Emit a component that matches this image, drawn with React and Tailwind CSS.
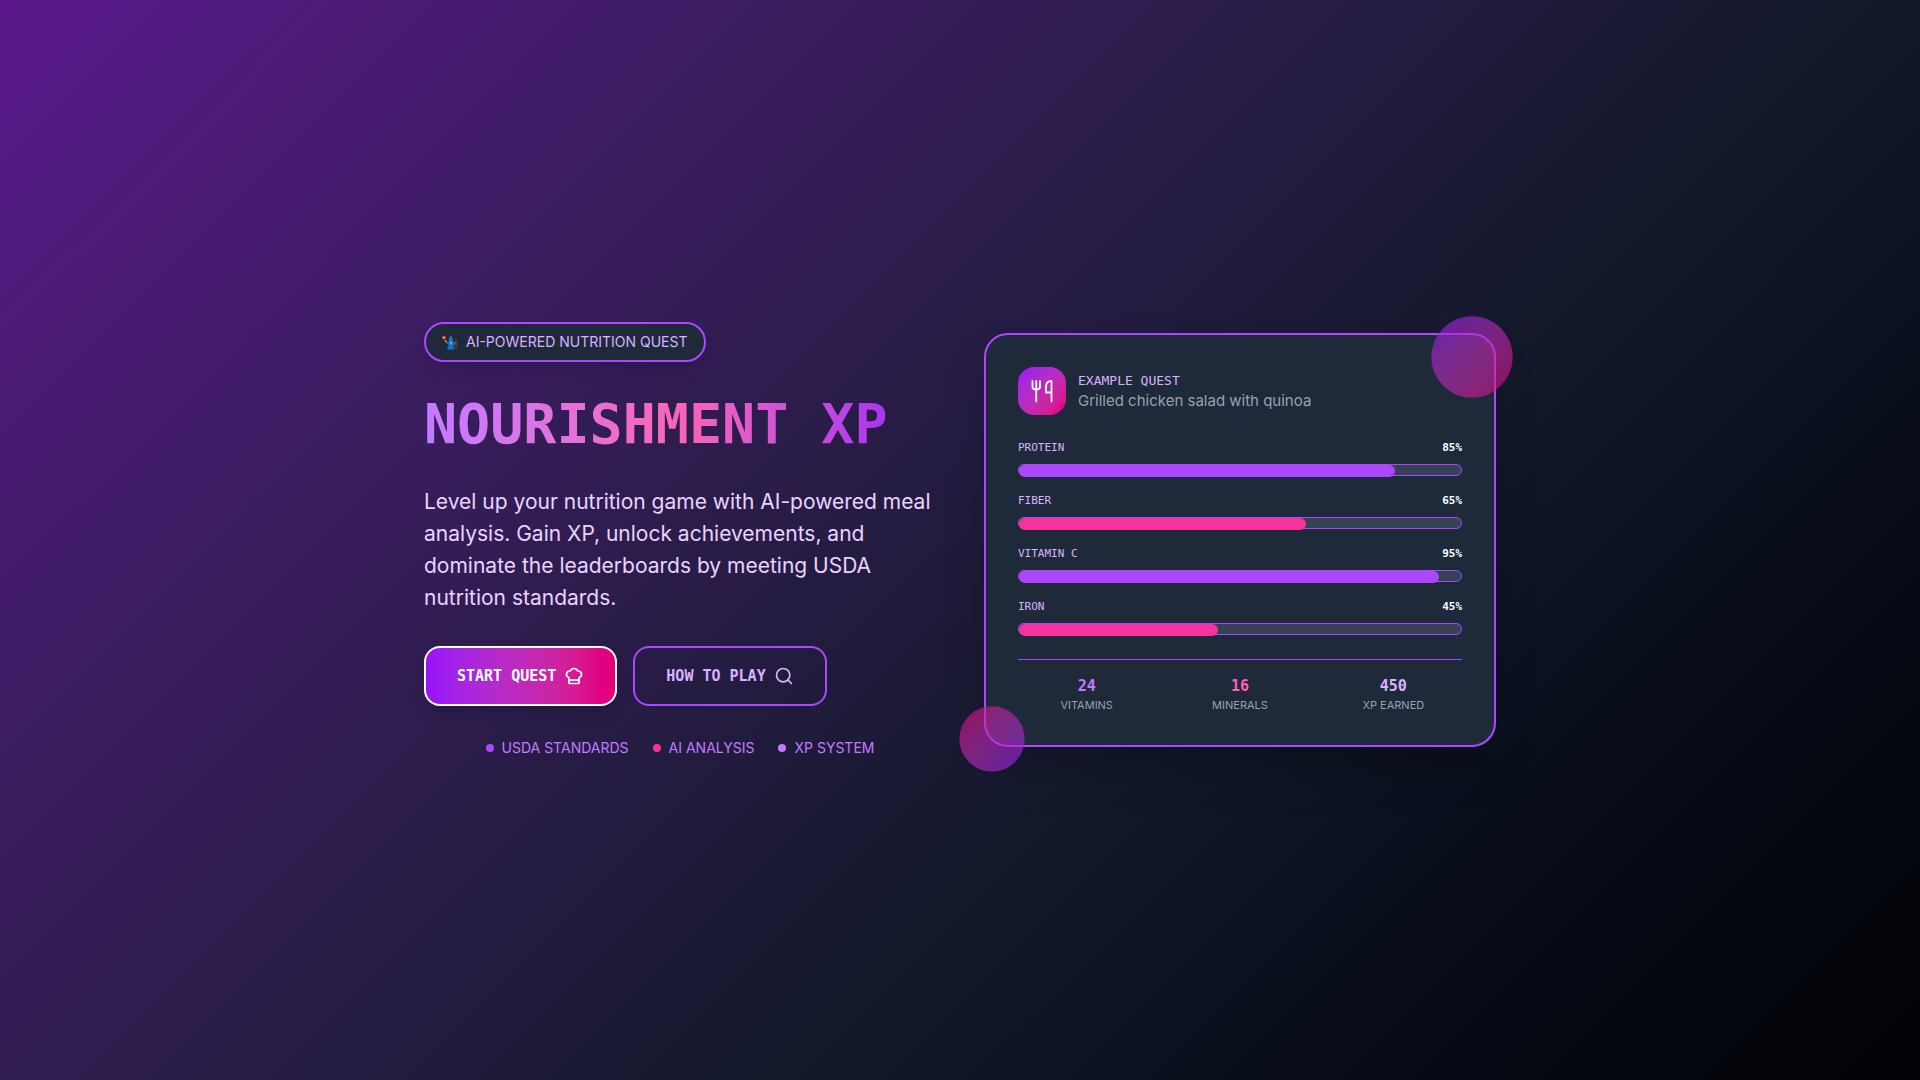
import { ChefHat, Search } from 'lucide-react';

const nutrients = [
  { name: 'PROTEIN', value: 85, bar: 'bg-purple-500' },
  { name: 'FIBER', value: 65, bar: 'bg-pink-500' },
  { name: 'VITAMIN C', value: 95, bar: 'bg-purple-500' },
  { name: 'IRON', value: 45, bar: 'bg-pink-500' },
];

const stats = [
  { value: '24', label: 'VITAMINS', color: 'text-purple-400' },
  { value: '16', label: 'MINERALS', color: 'text-pink-400' },
  { value: '450', label: 'XP EARNED', color: 'text-purple-300' },
];

const features = [
  { label: 'USDA STANDARDS', dot: 'bg-purple-500' },
  { label: 'AI ANALYSIS', dot: 'bg-pink-500' },
  { label: 'XP SYSTEM', dot: 'bg-purple-400' },
];

const WizardIcon = () => (
  <svg className="w-4 h-4" viewBox="0 0 16 16" aria-hidden="true">
    <path d="M8.6 0.8 L11.4 5.4 H6.4 Z" fill="#1976b8" />
    <path d="M7 5.4 h3.8 v2 q-1.9 2 -3.8 0 Z" fill="#5b6f86" />
    <path d="M3.6 7.2 l3.4 0.6 h4 l2.6 0.2 v2.6 l-2.4 0.4 l1.2 4.4 H5 l1.6 -4.8 l-3 -1.6 Z" fill="#0f74c4" />
    <path d="M7.6 8 l1.4 3 1.4 -3 Z" fill="#8aa9c4" />
    <path d="M14 5.6 V15" stroke="#8d4a2c" strokeWidth="1" />
    <circle cx="1.9" cy="3.6" r="1.9" fill="#f4511e" />
    <circle cx="2.2" cy="3.8" r="0.9" fill="#ffb03a" />
    <circle cx="3.6" cy="7" r="0.9" fill="#f6a13a" />
  </svg>
);

const CutleryIcon = () => (
  <svg className="w-6 h-6" fill="none" stroke="currentColor" viewBox="0 0 24 24" aria-hidden="true">
    <path strokeLinecap="round" strokeWidth={1.8} d="M2.5 2v6c0 1.6 1.3 2.500 3.750 2.500S10 9.600 10 8V2M6.250 2v20.500" />
    <path strokeLinecap="round" strokeLinejoin="round" strokeWidth={1.8} d="M21.500 22.500V2c-3.500 0-5.500 2.500-5.500 6v5.500h5.500" />
  </svg>
);

const NutrientBar = ({ name, value, bar }) => (
  <div>
    <div className="flex justify-between mb-2 font-['DejaVu_Sans_Mono',monospace] text-[11px] leading-[17px]">
      <span className="text-purple-300">{name}</span>
      <span className="text-white font-bold">{value}%</span>
    </div>
    <div className="h-3 bg-gray-700 rounded-full border border-purple-500">
      <div className={`h-3 rounded-full ${bar}`} style={{ width: `${value}%` }} />
    </div>
  </div>
);

const QuestCard = () => (
  <div className="relative">
    <div className="bg-gray-800 border-2 border-purple-500 rounded-3xl p-8 shadow-2xl">
      <div className="flex items-center gap-3 mb-6">
        <div className="w-12 h-12 rounded-2xl bg-gradient-to-br from-purple-600 to-pink-600 text-white flex items-center justify-center">
          <CutleryIcon />
        </div>
        <div>
          <h2 className="font-['DejaVu_Sans_Mono',monospace] text-[13px] leading-5 text-purple-300">EXAMPLE QUEST</h2>
          <p className="text-[15px] leading-5 text-gray-400">Grilled chicken salad with quinoa</p>
        </div>
      </div>

      <div className="space-y-4">
        {nutrients.map((nutrient) => (
          <NutrientBar key={nutrient.name} {...nutrient} />
        ))}
      </div>

      <div className="mt-6 pt-4 border-t border-purple-500 grid grid-cols-3 gap-4 text-center">
        {stats.map((stat) => (
          <div key={stat.label}>
            <div className={`font-['DejaVu_Sans_Mono',monospace] text-[15px] leading-[21px] font-bold ${stat.color}`}>
              {stat.value}
            </div>
            <div className="text-[11px] leading-4 text-gray-400">{stat.label}</div>
          </div>
        ))}
      </div>
    </div>

    <div className="absolute -top-4 -right-4 w-20 h-20 scale-102 rounded-full bg-gradient-to-br from-purple-600 to-pink-600 opacity-60" />
    <div className="absolute -bottom-6 -left-6 w-16 h-16 scale-102 rounded-full bg-gradient-to-br from-pink-600 to-purple-600 opacity-60" />
  </div>
);

const Hero = () => (
  <div>
    <div className="flex">
      <div className="flex items-center gap-2 h-10 px-4 mb-8 bg-gray-800 border-2 border-purple-500 rounded-full shadow-lg text-sm text-purple-300">
        <WizardIcon />
        <span>AI-POWERED NUTRITION QUEST</span>
      </div>
    </div>

    <h1 className="mb-8 font-['DejaVu_Sans_Mono',monospace] text-[55px] leading-[60px] font-bold whitespace-nowrap bg-gradient-to-r from-purple-400 via-pink-400 to-purple-600 bg-clip-text text-transparent">
      NOURISHMENT XP
    </h1>

    <p className="mb-8 text-[21px] leading-8 text-purple-200">
      Level up your nutrition game with AI-powered meal analysis. Gain XP, unlock achievements, and dominate the
      leaderboards by meeting USDA nutrition standards.
    </p>

    <div className="flex gap-4 font-['DejaVu_Sans_Mono',monospace] text-[15px] font-bold">
      <button className="flex items-center justify-center gap-2 h-[60px] px-[31px] rounded-2xl border-2 border-white bg-gradient-to-r from-purple-600 to-pink-600 text-white shadow-lg">
        START QUEST
        <ChefHat className="w-5 h-5" />
      </button>
      <button className="flex items-center justify-center gap-2 h-[60px] px-[31px] rounded-2xl border-2 border-purple-500 text-purple-300">
        HOW TO PLAY
        <Search className="w-5 h-5" />
      </button>
    </div>

    <ul className="flex justify-center gap-6 mt-8 text-sm text-purple-400">
      {features.map((feature) => (
        <li key={feature.label} className="flex items-center gap-2">
          <span className={`w-2 h-2 rounded-full ${feature.dot}`} />
          {feature.label}
        </li>
      ))}
    </ul>
  </div>
);

export default function App() {
  return (
    <main className="min-h-screen flex items-center justify-center px-10 bg-linear-135 from-purple-900 via-gray-900 via-64% to-black to-[128%] font-['Inter',sans-serif]">
      <div className="w-full max-w-[1072px] grid lg:grid-cols-2 gap-12 items-center">
        <Hero />
        <QuestCard />
      </div>
    </main>
  );
}
